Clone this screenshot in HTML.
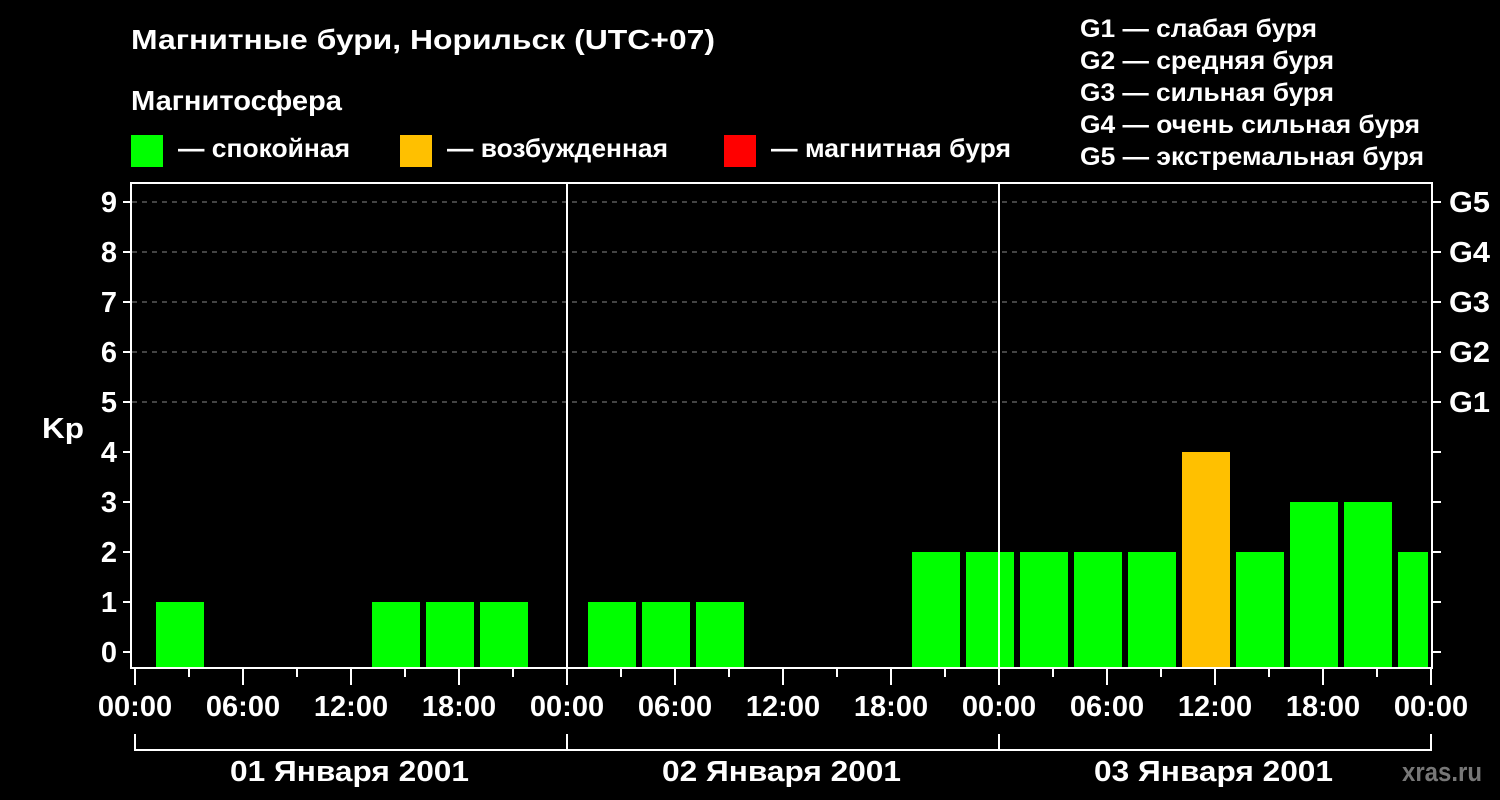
<!DOCTYPE html>
<html><head><meta charset="utf-8"><style>
html,body{margin:0;padding:0;background:#000;}
svg{display:block;}
text{font-family:"Liberation Sans",sans-serif;font-weight:bold;fill:#fff;}
</style></head><body>
<svg width="1500" height="800" viewBox="0 0 1500 800">
<rect width="1500" height="800" fill="#000"/>
<text x="131" y="49" font-size="28" textLength="584" lengthAdjust="spacingAndGlyphs">Магнитные бури, Норильск (UTC+07)</text>
<text x="131" y="110" font-size="28" textLength="211" lengthAdjust="spacingAndGlyphs">Магнитосфера</text>
<rect x="131" y="135" width="32" height="32" fill="#00ff00"/>
<text x="178" y="157" font-size="26" textLength="172" lengthAdjust="spacingAndGlyphs">— спокойная</text>
<rect x="400" y="135" width="32" height="32" fill="#ffc000"/>
<text x="447" y="157" font-size="26" textLength="221" lengthAdjust="spacingAndGlyphs">— возбужденная</text>
<rect x="724" y="135" width="32" height="32" fill="#ff0000"/>
<text x="771" y="157" font-size="26" textLength="240" lengthAdjust="spacingAndGlyphs">— магнитная буря</text>
<g font-size="25" lengthAdjust="spacingAndGlyphs">
<text x="1080" y="37" textLength="237" lengthAdjust="spacingAndGlyphs">G1 — слабая буря</text>
<text x="1080" y="69" textLength="254" lengthAdjust="spacingAndGlyphs">G2 — средняя буря</text>
<text x="1080" y="101" textLength="254" lengthAdjust="spacingAndGlyphs">G3 — сильная буря</text>
<text x="1080" y="133" textLength="340" lengthAdjust="spacingAndGlyphs">G4 — очень сильная буря</text>
<text x="1080" y="165" textLength="344" lengthAdjust="spacingAndGlyphs">G5 — экстремальная буря</text>
</g>
<g stroke="#888" stroke-width="1" stroke-dasharray="5,5">
<line x1="132" y1="202" x2="1431" y2="202"/>
<line x1="132" y1="252" x2="1431" y2="252"/>
<line x1="132" y1="302" x2="1431" y2="302"/>
<line x1="132" y1="352" x2="1431" y2="352"/>
<line x1="132" y1="402" x2="1431" y2="402"/>
</g>
<g fill="#00ff00">
<rect x="156" y="602" width="48" height="66"/>
<rect x="372" y="602" width="48" height="66"/>
<rect x="426" y="602" width="48" height="66"/>
<rect x="480" y="602" width="48" height="66"/>
<rect x="588" y="602" width="48" height="66"/>
<rect x="642" y="602" width="48" height="66"/>
<rect x="696" y="602" width="48" height="66"/>
<rect x="912" y="552" width="48" height="116"/>
<rect x="966" y="552" width="48" height="116"/>
<rect x="1020" y="552" width="48" height="116"/>
<rect x="1074" y="552" width="48" height="116"/>
<rect x="1128" y="552" width="48" height="116"/>
<rect x="1236" y="552" width="48" height="116"/>
<rect x="1290" y="502" width="48" height="166"/>
<rect x="1344" y="502" width="48" height="166"/>
<rect x="1398" y="552" width="30" height="116"/>
</g>
<rect x="1182" y="452" width="48" height="216" fill="#ffc000"/>
<g stroke="#fff" stroke-width="2" fill="none">
<rect x="131" y="183" width="1301" height="485"/>
<line x1="567" y1="183" x2="567" y2="668"/>
<line x1="999" y1="183" x2="999" y2="668"/>
<path d="M123 202H131M123 252H131M123 302H131M123 352H131M123 402H131M123 452H131M123 502H131M123 552H131M123 602H131M123 652H131"/>
<path d="M1432 202H1441M1432 252H1441M1432 302H1441M1432 352H1441M1432 402H1441M1432 452H1441M1432 502H1441M1432 552H1441M1432 602H1441M1432 652H1441"/>
<path d="M135 668V685M243 668V685M351 668V685M459 668V685M567 668V685M675 668V685M783 668V685M891 668V685M999 668V685M1107 668V685M1215 668V685M1323 668V685M1431 668V685"/>
<path d="M189 668V677M297 668V677M405 668V677M513 668V677M621 668V677M729 668V677M837 668V677M945 668V677M1053 668V677M1161 668V677M1269 668V677M1377 668V677"/>
<path d="M135 734V750H1431V734M567 734V750M999 734V750"/>
</g>
<g font-size="29" text-anchor="end">
<text x="117" y="212">9</text><text x="117" y="262">8</text><text x="117" y="312">7</text>
<text x="117" y="362">6</text><text x="117" y="412">5</text><text x="117" y="462">4</text>
<text x="117" y="512">3</text><text x="117" y="562">2</text><text x="117" y="612">1</text>
<text x="117" y="662">0</text>
</g>
<g font-size="29">
<text x="1449" y="212" textLength="41" lengthAdjust="spacingAndGlyphs">G5</text><text x="1449" y="262" textLength="41" lengthAdjust="spacingAndGlyphs">G4</text><text x="1449" y="312" textLength="41" lengthAdjust="spacingAndGlyphs">G3</text>
<text x="1449" y="362" textLength="41" lengthAdjust="spacingAndGlyphs">G2</text><text x="1449" y="412" textLength="41" lengthAdjust="spacingAndGlyphs">G1</text>
</g>
<text x="42" y="438" font-size="29" textLength="42" lengthAdjust="spacingAndGlyphs">Kp</text>
<g font-size="29" text-anchor="middle">
<text x="135" y="716">00:00</text><text x="243" y="716">06:00</text><text x="351" y="716">12:00</text><text x="459" y="716">18:00</text>
<text x="567" y="716">00:00</text><text x="675" y="716">06:00</text><text x="783" y="716">12:00</text><text x="891" y="716">18:00</text>
<text x="999" y="716">00:00</text><text x="1107" y="716">06:00</text><text x="1215" y="716">12:00</text><text x="1323" y="716">18:00</text>
<text x="1431" y="716">00:00</text>
</g>
<g font-size="29">
<text x="230" y="781" textLength="239" lengthAdjust="spacingAndGlyphs">01 Января 2001</text>
<text x="662" y="781" textLength="239" lengthAdjust="spacingAndGlyphs">02 Января 2001</text>
<text x="1094" y="781" textLength="239" lengthAdjust="spacingAndGlyphs">03 Января 2001</text>
</g>
<text x="1402" y="781" font-size="27" textLength="80" lengthAdjust="spacingAndGlyphs" style="fill:#777">xras.ru</text>
</svg>
</body></html>
